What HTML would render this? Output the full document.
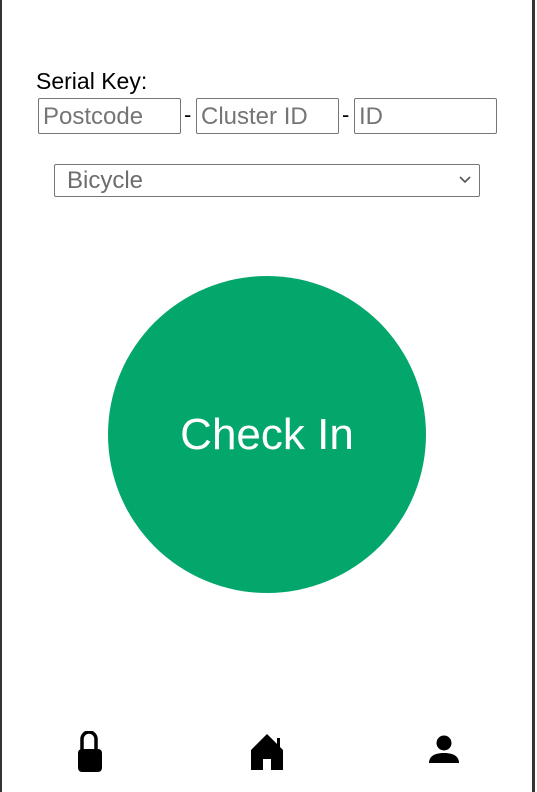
<!DOCTYPE html>
<html><head><style>
body{margin:0;width:537px;height:792px;background:#fff;position:relative;overflow:hidden;font-family:"Liberation Sans",sans-serif}
.bl{position:absolute;left:0;top:0;width:2px;height:792px;background:#333}
.br{position:absolute;left:532px;top:0;width:3px;height:792px;background:#333}
.lbl{position:absolute;left:36px;top:68px;font-size:23px;color:#000;font-family:"Liberation Sans",sans-serif}
.in{position:absolute;top:98px;width:143px;height:36px;border:1px solid #767676;border-radius:2px;box-sizing:border-box;font-size:24px;color:#757575;padding:3px 0 0 4px;line-height:29px}
.dash{position:absolute;top:102px;font-size:22px}
.sel{position:absolute;left:54px;top:164px;width:426px;height:33px;border:1px solid #767676;border-radius:2px;box-sizing:border-box;font-size:24px;color:#6d6d6d;padding:1px 0 0 12px;line-height:29px}
.circ{position:absolute;left:108px;top:276px;width:318px;height:317px;border-radius:50%;background:#04a76b;color:#fff;font-size:44px;text-align:center;line-height:317px}
svg{position:absolute}
</style></head><body>
<div class="bl"></div><div class="br"></div>
<div class="lbl">Serial Key:</div>
<div class="in" style="left:38px">Postcode</div>
<div class="dash" style="left:184px">-</div>
<div class="in" style="left:196px">Cluster ID</div>
<div class="dash" style="left:342px">-</div>
<div class="in" style="left:354px">ID</div>
<div class="sel">Bicycle<svg style="right:8px;top:11px" width="12" height="8" viewBox="0 0 12 8"><path d="M1 1l5 5 5-5" fill="none" stroke="#555" stroke-width="1.6"/></svg></div>
<div class="circ">Check In</div>
<svg style="left:76px;top:731px" width="28" height="42" viewBox="0 0 28 42"><path d="M6 20V8a7 7 0 0 1 14 0v12" fill="none" stroke="#000" stroke-width="3.5"/><rect x="2" y="18" width="24" height="23" rx="4" fill="#000"/></svg>
<svg style="left:250px;top:733px" width="34" height="38" viewBox="0 0 34 38"><path d="M17 1L1 17v20h12V26h8v11h12V17l-3-3V5h-3v6z" fill="#000"/></svg>
<svg style="left:428px;top:735px" width="32" height="29" viewBox="0 0 32 29"><circle cx="16" cy="8" r="7.5" fill="#000"/><path d="M1 28c0-7 6-10 15-10s15 3 15 10z" fill="#000"/></svg>
</body></html>
